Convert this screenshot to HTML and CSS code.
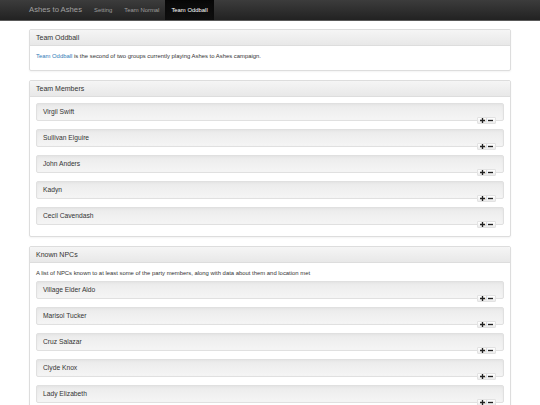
FILE: index.html
```html
<!DOCTYPE html>
<html lang="en">
<head>
    <meta charset="UTF-8">
    <meta name="viewport" content="width=device-width, initial-scale=1.0">
    <title>Team Oddball - Ashes to Ashes</title>
    <link rel="stylesheet" href="styles.css">
</head>
<body>

<nav class="navbar">
    <div class="container navbar-inner">
        <a class="brand" href="#">Ashes to Ashes</a>
        <ul class="nav">
            <li><a href="#">Setting</a></li>
            <li><a href="#">Team Normal</a></li>
            <li class="active"><a href="#">Team Oddball</a></li>
        </ul>
    </div>
</nav>

<div class="container">

    <div class="panel">
        <div class="panel-heading">Team Oddball</div>
        <div class="panel-body">
            <p><a href="#">Team Oddball</a> is the second of two groups currently playing Ashes to Ashes campaign.</p>
        </div>
    </div>

    <div class="panel">
        <div class="panel-heading">Team Members</div>
        <div class="panel-body list">
            <div class="item"><div class="well">Virgil Swift</div><div class="tools"><span class="toggle"><svg viewBox="0 0 6 6"><path d="M2.2 0h1.6v2.2H6v1.6H3.8V6H2.2V3.8H0V2.2h2.2z"/></svg><i>/</i><svg viewBox="0 0 6 6"><path d="M0 2.2h6v1.6H0z"/></svg></span></div></div>
            <div class="item"><div class="well">Sullivan Elguire</div><div class="tools"><span class="toggle"><svg viewBox="0 0 6 6"><path d="M2.2 0h1.6v2.2H6v1.6H3.8V6H2.2V3.8H0V2.2h2.2z"/></svg><i>/</i><svg viewBox="0 0 6 6"><path d="M0 2.2h6v1.6H0z"/></svg></span></div></div>
            <div class="item"><div class="well">John Anders</div><div class="tools"><span class="toggle"><svg viewBox="0 0 6 6"><path d="M2.2 0h1.6v2.2H6v1.6H3.8V6H2.2V3.8H0V2.2h2.2z"/></svg><i>/</i><svg viewBox="0 0 6 6"><path d="M0 2.2h6v1.6H0z"/></svg></span></div></div>
            <div class="item"><div class="well">Kadyn</div><div class="tools"><span class="toggle"><svg viewBox="0 0 6 6"><path d="M2.2 0h1.6v2.2H6v1.6H3.8V6H2.2V3.8H0V2.2h2.2z"/></svg><i>/</i><svg viewBox="0 0 6 6"><path d="M0 2.2h6v1.6H0z"/></svg></span></div></div>
            <div class="item"><div class="well">Cecil Cavendash</div><div class="tools"><span class="toggle"><svg viewBox="0 0 6 6"><path d="M2.2 0h1.6v2.2H6v1.6H3.8V6H2.2V3.8H0V2.2h2.2z"/></svg><i>/</i><svg viewBox="0 0 6 6"><path d="M0 2.2h6v1.6H0z"/></svg></span></div></div>
        </div>
    </div>

    <div class="panel">
        <div class="panel-heading">Known NPCs</div>
        <div class="panel-body list">
            <p>A list of NPCs known to at least some of the party members, along with data about them and location met</p>
            <div class="item"><div class="well">Village Elder Aldo</div><div class="tools"><span class="toggle"><svg viewBox="0 0 6 6"><path d="M2.2 0h1.6v2.2H6v1.6H3.8V6H2.2V3.8H0V2.2h2.2z"/></svg><i>/</i><svg viewBox="0 0 6 6"><path d="M0 2.2h6v1.6H0z"/></svg></span></div></div>
            <div class="item"><div class="well">Marisol Tucker</div><div class="tools"><span class="toggle"><svg viewBox="0 0 6 6"><path d="M2.2 0h1.6v2.2H6v1.6H3.8V6H2.2V3.8H0V2.2h2.2z"/></svg><i>/</i><svg viewBox="0 0 6 6"><path d="M0 2.2h6v1.6H0z"/></svg></span></div></div>
            <div class="item"><div class="well">Cruz Salazar</div><div class="tools"><span class="toggle"><svg viewBox="0 0 6 6"><path d="M2.2 0h1.6v2.2H6v1.6H3.8V6H2.2V3.8H0V2.2h2.2z"/></svg><i>/</i><svg viewBox="0 0 6 6"><path d="M0 2.2h6v1.6H0z"/></svg></span></div></div>
            <div class="item"><div class="well">Clyde Knox</div><div class="tools"><span class="toggle"><svg viewBox="0 0 6 6"><path d="M2.2 0h1.6v2.2H6v1.6H3.8V6H2.2V3.8H0V2.2h2.2z"/></svg><i>/</i><svg viewBox="0 0 6 6"><path d="M0 2.2h6v1.6H0z"/></svg></span></div></div>
            <div class="item"><div class="well">Lady Elizabeth</div><div class="tools"><span class="toggle"><svg viewBox="0 0 6 6"><path d="M2.2 0h1.6v2.2H6v1.6H3.8V6H2.2V3.8H0V2.2h2.2z"/></svg><i>/</i><svg viewBox="0 0 6 6"><path d="M0 2.2h6v1.6H0z"/></svg></span></div></div>
        </div>
    </div>

</div>

</body>
</html>
```

FILE: styles.css
```css
body {
    margin: 0;
    font-family: 'Liberation Sans', Arial, sans-serif;
    font-size: 5.9px;
    line-height: 8px;
    color: #333;
    background-color: #fff;
}

a {
    color: #337ab7;
    text-decoration: none;
}

p {
    margin: 0 0 4px;
}

.container {
    width: 494px;
    margin: 0 auto;
    padding: 0 6px;
    box-sizing: border-box;
}

/* top bar */
.navbar {
    height: 21px;
    margin-bottom: 8px;
    background-image: linear-gradient(to bottom, #3c3c3c 0%, #222 100%);
    border-bottom: 1px solid #5a5a5a;
    box-sizing: border-box;
}

.navbar-inner {
    display: flex;
    height: 20px;
}

.brand {
    margin-left: -6px;
    padding: 6px;
    font-size: 7.7px;
    line-height: 8px;
    color: #a0a0a0;
}

.nav {
    display: flex;
    margin: 0;
    padding: 0;
    list-style: none;
}

.nav a {
    display: block;
    height: 20px;
    padding: 6px 6px;
    box-sizing: border-box;
    color: #9d9d9d;
}

.nav .active a {
    color: #fff;
    background-image: linear-gradient(to bottom, #080808 0%, #0f0f0f 100%);
    box-shadow: inset 0 1px 2px rgba(0, 0, 0, .25);
}

/* panels */
.panel {
    margin-bottom: 9px;
    border: 1px solid #ddd;
    border-radius: 2px;
    box-shadow: 0 1px 2px rgba(0, 0, 0, .05);
    background-color: #fff;
}

.panel-heading {
    padding: 4px 6px;
    font-size: 7px;
    line-height: 7px;
    border-bottom: 1px solid #ddd;
    border-radius: 2px 2px 0 0;
    background-image: linear-gradient(to bottom, #f5f5f5 0%, #e8e8e8 100%);
}

.panel-body {
    padding: 6px;
}

.panel-body.list {
    padding-bottom: 3px;
}

/* member and npc rows */
.item {
    display: flex;
    flex-direction: column;
}

.well {
    height: 18px;
    padding: 4px 6px;
    box-sizing: border-box;
    font-size: 6.7px;
    line-height: 8px;
    border: 1px solid #e0e0e0;
    border-radius: 2px;
    background-image: linear-gradient(to bottom, #ebebeb 0%, #f5f5f5 100%);
    box-shadow: inset 0 1px 3px rgba(0, 0, 0, .04);
}

.tools {
    display: flex;
    justify-content: flex-end;
    margin: -4px 8px 5px 0;
}

.toggle {
    display: flex;
    align-items: center;
    gap: 1px;
    height: 7px;
    padding: 0 2px;
    box-sizing: border-box;
    border: 1px solid #e2e2e2;
    border-radius: 1px;
    background-image: linear-gradient(to bottom, #fff 0%, #ececec 100%);
}

.toggle svg {
    width: 5px;
    height: 5px;
    fill: #222;
}

.toggle i {
    font-style: normal;
    font-size: 5px;
    line-height: 5px;
    color: #999;
}
```
